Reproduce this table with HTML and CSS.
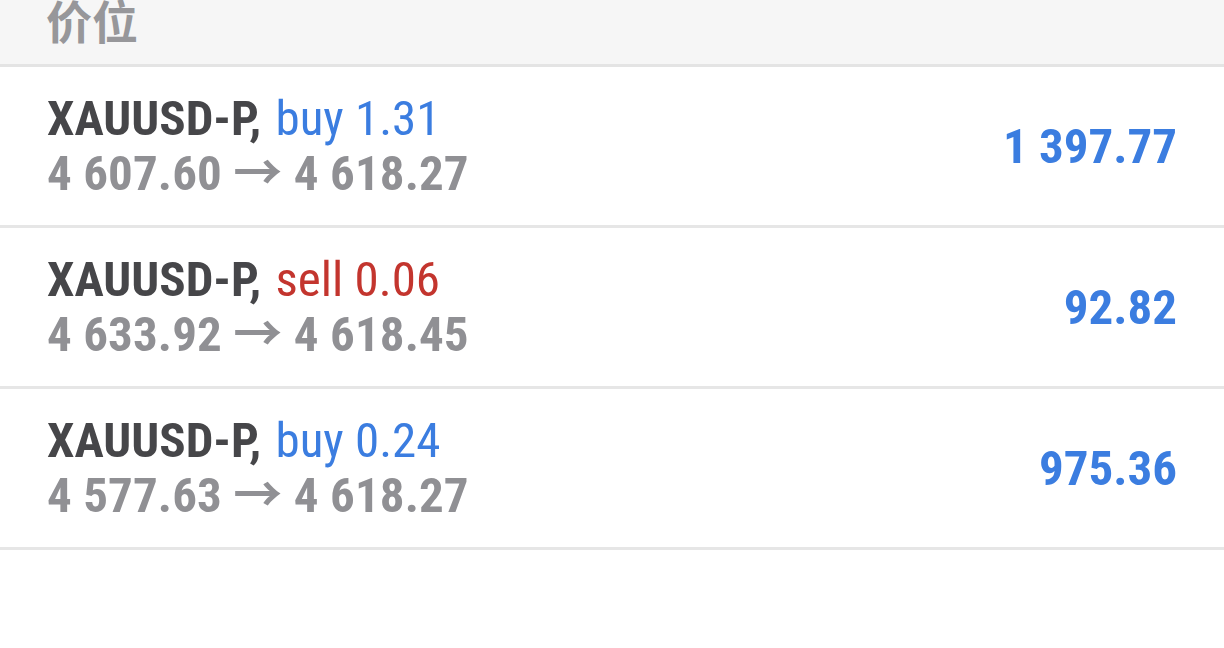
FILE: index.html
```html
<!DOCTYPE html>
<html lang="zh">
<head>
<meta charset="utf-8">
<link rel="stylesheet" href="styles.css">
</head>
<body>
<div class="page">
  <div class="header"><span class="header-title">价位</span></div>
  <div class="list">
    <div class="row">
      <div class="info">
        <div class="line1"><span class="sym">XAUUSD-P,</span> <span class="buy">buy 1.31</span></div>
        <div class="line2">4 607.60 → 4 618.27</div>
      </div>
      <div class="profit">1 397.77</div>
    </div>
    <div class="row">
      <div class="info">
        <div class="line1"><span class="sym">XAUUSD-P,</span> <span class="sell">sell 0.06</span></div>
        <div class="line2">4 633.92 → 4 618.45</div>
      </div>
      <div class="profit">92.82</div>
    </div>
    <div class="row">
      <div class="info">
        <div class="line1"><span class="sym">XAUUSD-P,</span> <span class="buy">buy 0.24</span></div>
        <div class="line2">4 577.63 → 4 618.27</div>
      </div>
      <div class="profit">975.36</div>
    </div>
  </div>
</div>
</body>
</html>
```
FILE: styles.css
```css
html, body {
  margin: 0;
  padding: 0;
  background: #ffffff;
}
.page {
  width: 1224px;
  height: 648px;
  overflow: hidden;
  font-family: Roboto, "Noto Sans CJK SC", sans-serif;
  font-stretch: 75%;
}
.header {
  height: 64px;
  background: #f6f6f6;
  border-bottom: 3px solid #e4e4e4;
  padding-left: 46px;
  display: flex;
  align-items: flex-end;
  overflow: hidden;
}
.header-title {
  font-family: "Noto Sans CJK SC", sans-serif;
  font-weight: 700;
  font-size: 46px;
  line-height: 46px;
  color: #97979a;
  margin-bottom: 22px;
}
.row {
  height: 158px;
  border-bottom: 3px solid #e6e6e6;
  display: flex;
  align-items: center;
  justify-content: space-between;
  padding: 0 47px 0 47px;
}
.info {
  display: flex;
  flex-direction: column;
}
.line1, .line2 {
  font-size: 49px;
  line-height: 55px;
  white-space: nowrap;
}
.sym {
  font-weight: 700;
  color: #464649;
  margin-right: 3px;
}
.buy {
  color: #3b7de0;
}
.sell {
  color: #c3352e;
}
.line2 {
  font-weight: 700;
  color: #909094;
  letter-spacing: 0.1px;
}
.profit {
  font-size: 49px;
  font-weight: 700;
  color: #3b7de0;
}
```
